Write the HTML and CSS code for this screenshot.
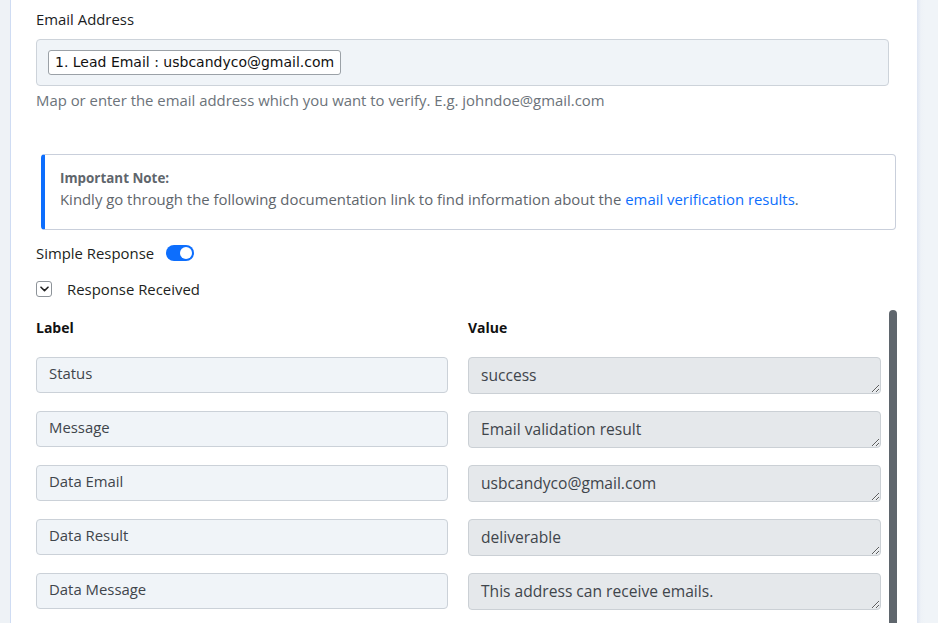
FILE: index.html
```html
<!DOCTYPE html>
<html>
<head>
<meta charset="utf-8">
<link rel="stylesheet" href="styles.css">
</head>
<body>
<div class="page">
  <div class="side-left"></div>
  <main class="panel">
    <div class="field">
      <div class="field-label">Email Address</div>
      <div class="map-input">
        <span class="chip">1. Lead Email : usbcandyco@gmail.com</span>
      </div>
      <div class="help">Map or enter the email address which you want to verify. E.g. johndoe@gmail.com</div>
    </div>

    <div class="note">
      <div class="note-title">Important Note:</div>
      <div class="note-text">Kindly go through the following documentation link to find information about the <a class="link" href="#">email verification results</a>.</div>
    </div>

    <div class="toggle-row">
      <span>Simple Response</span>
      <span class="switch"><span class="knob"></span></span>
    </div>

    <div class="collapse-row">
      <span class="chev">
        <svg width="9" height="6" viewBox="0 0 9 6"><path d="M1 1.2 L4.5 4.6 L8 1.2" fill="none" stroke="#222" stroke-width="1.6" stroke-linecap="round" stroke-linejoin="round"/></svg>
      </span>
      <span>Response Received</span>
    </div>

    <div class="table">
      <div class="th">Label</div>
      <div class="th">Value</div>

      <div class="cell-label">Status</div>
      <textarea class="cell-value" readonly>success</textarea>

      <div class="cell-label">Message</div>
      <textarea class="cell-value" readonly>Email validation result</textarea>

      <div class="cell-label">Data Email</div>
      <textarea class="cell-value" readonly>usbcandyco@gmail.com</textarea>

      <div class="cell-label">Data Result</div>
      <textarea class="cell-value" readonly>deliverable</textarea>

      <div class="cell-label">Data Message</div>
      <textarea class="cell-value" readonly>This address can receive emails.</textarea>
    </div>

    <div class="scrollbar"></div>
  </main>
  <div class="side-right"></div>
</div>
</body>
</html>
```

FILE: styles.css
```css
html, body {
  margin: 0;
  padding: 0;
  height: 100%;
  overflow: hidden;
}
body {
  font-family: "Open Sans", Lato, sans-serif;
  font-size: 14.9px;
  color: #1d1f21;
  background: #f0f4f8;
}
.page {
  display: flex;
  height: 623px;
}
.side-left {
  width: 10px;
  flex: none;
  background: #eef2f6;
  border-right: 1px solid #cfdcf3;
}
.side-right {
  width: 21px;
  flex: none;
  background: linear-gradient(to right, #dfe6f3 0, #eef2f7 4px, #f0f4f8 8px);
}
.panel {
  flex: 1;
  background: #fff;
  position: relative;
  padding: 10px 0 0 25px;
  box-sizing: border-box;
  overflow: hidden;
}
.field-label {
  font-size: 14.9px;
  line-height: 18px;
  color: #1b1d1f;
}
.map-input {
  margin-top: 11px;
  width: 853px;
  height: 47px;
  box-sizing: border-box;
  background: #f0f4f8;
  border: 1px solid #cdd3da;
  border-radius: 4px;
  padding: 10px 11px;
}
.chip {
  display: inline-block;
  box-sizing: border-box;
  height: 25px;
  line-height: 23px;
  padding: 0 6px;
  background: #fff;
  border: 1px solid #9ba1a7;
  border-radius: 3px;
  font-family: "DejaVu Sans", sans-serif;
  font-size: 14px;
  color: #111;
}
.help {
  margin-top: 4px;
  color: #6c737a;
  font-size: 14.9px;
  line-height: 20px;
}
.note {
  margin: 44px 0 0 5px;
  width: 855px;
  height: 76px;
  box-sizing: border-box;
  border: 1px solid #c9cfdb;
  border-left: 4px solid #0d6efd;
  border-radius: 4px;
  padding: 14px 0 0 15px;
  color: #5f666c;
}
.note-title {
  font-weight: bold;
  font-size: 13.4px;
  line-height: 18px;
}
.note-text {
  font-size: 14.9px;
  line-height: 24px;
}
.link {
  color: #0d6efd;
  text-decoration: none;
}
.toggle-row {
  margin-top: 12px;
  display: flex;
  align-items: center;
  gap: 12px;
  height: 22px;
  font-size: 14.9px;
}
.switch {
  width: 28px;
  height: 16px;
  border-radius: 8px;
  background: #0d6efd;
  position: relative;
  display: inline-block;
}
.knob {
  position: absolute;
  right: 2px;
  top: 2px;
  width: 12px;
  height: 12px;
  border-radius: 50%;
  background: #fff;
}
.collapse-row {
  margin-top: 15px;
  display: flex;
  align-items: center;
  gap: 15px;
  height: 20px;
  font-size: 14.9px;
}
.chev {
  width: 14px;
  height: 14px;
  border: 1px solid #8d9399;
  border-radius: 3px;
  display: inline-flex;
  align-items: center;
  justify-content: center;
}
.table {
  margin-top: 20px;
  display: grid;
  grid-template-columns: 412px 413px;
  column-gap: 20px;
  row-gap: 17px;
  align-items: start;
}
.th {
  font-weight: bold;
  font-size: 14px;
  line-height: 18px;
  margin-bottom: 3px;
  color: #111;
}
.cell-label {
  box-sizing: border-box;
  height: 36px;
  background: #f0f4f8;
  border: 1px solid #cbd1d8;
  border-radius: 4px;
  padding: 5px 12px;
  font-size: 14.9px;
  line-height: 20px;
  color: #3f454b;
}
.cell-value {
  display: block;
  box-sizing: border-box;
  width: 413px;
  height: 37px;
  margin: 0;
  background: #e5e8eb;
  border: 1px solid #cbd0d5;
  border-radius: 4px;
  padding: 7px 12px;
  font-family: "Open Sans", Lato, sans-serif;
  font-size: 15.6px;
  line-height: 20px;
  color: #3f454b;
  overflow: hidden;
  resize: vertical;
  outline: none;
}
.scrollbar {
  position: absolute;
  left: 878px;
  top: 310px;
  width: 8px;
  bottom: 0;
  background: #5f666d;
  border-radius: 4px 4px 0 0;
}
```
